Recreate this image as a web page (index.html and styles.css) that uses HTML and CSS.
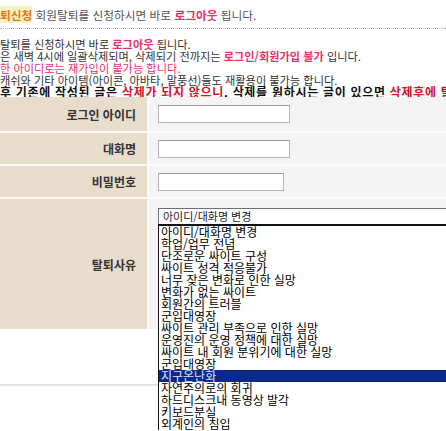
FILE: index.html
```html
<!DOCTYPE html>
<html lang="ko">

<head>
    <meta charset="UTF-8">
    <title>회원탈퇴신청</title>
    <link rel="stylesheet" href="styles.css">
</head>

<body>
    <div id="page">
        <div class="head">
            <span class="head-title">퇴신청</span>
            회원탈퇴를 신청하시면 바로 <span class="pink">로그아웃</span> 됩니다.
        </div>

        <div class="notice">
            <p>탈퇴를 신청하시면 바로 <span class="pink">로그아웃</span> 됩니다.</p>
            <p>은 새벽 4시에 일괄삭제되며, 삭제되기 전까지는 <span class="pink">로그인/회원가입 불가</span> 입니다.</p>
            <p class="pink-line">한 아이디로는 재가입이 불가능 합니다.</p>
            <p>캐쉬와 기타 아이템(아이콘, 아바타, 말풍선)들도 재활용이 불가능 합니다.</p>
            <p class="strong-line">후 기존에 작성된 글은 <span class="red">삭제가 되지 않으니</span>. 삭제를 원하시는 글이 있으면 <span class="red">삭제후에 탈퇴</span></p>
        </div>

        <div class="form">
            <div class="label">로그인 아이디</div>
            <div class="field"><input type="text" class="box"></div>

            <div class="label">대화명</div>
            <div class="field"><input type="text" class="box"></div>

            <div class="label">비밀번호</div>
            <div class="field"><input type="password" class="box short"></div>

            <div class="label">탈퇴사유</div>
            <div class="field top">
                <div class="select">아이디/대화명 변경</div>
            </div>
        </div>

        <div class="bottom-line"></div>

        <ul class="dropdown">
            <li>아이디/대화명 변경</li>
            <li>학업/업무 전념</li>
            <li>단조로운 싸이트 구성</li>
            <li>싸이트 성격 적응불가</li>
            <li>너무 잦은 변화로 인한 실망</li>
            <li>변화가 없는 싸이트</li>
            <li>회원간의 트러블</li>
            <li>군입대영장</li>
            <li>싸이트 관리 부족으로 인한 실망</li>
            <li>운영진의 운영 정책에 대한 실망</li>
            <li>싸이트 내 회원 분위기에 대한 실망</li>
            <li>군입대영장</li>
            <li class="selected">지구온난화</li>
            <li>자연주의로의 회귀</li>
            <li>하드디스크내 동영상 발각</li>
            <li>키보드분실</li>
            <li>외계인의 침입</li>
        </ul>
    </div>
</body>

</html>
```

FILE: styles.css
```css
body {
    margin: 0;
    font-family: 'Noto Sans CJK KR', 'DejaVu Sans', sans-serif;
    font-size: 11px;
    color: #444;
    background: #fff;
    overflow: hidden;
}

#page {
    position: relative;
    width: 446px;
    height: 431px;
    overflow: hidden;
}

.head {
    height: 24px;
    line-height: 22px;
    padding-top: 4px;
    border-bottom: 1px dotted #aaa;
    white-space: nowrap;
    color: #555;
    font-size: 11.7px;
}

.head-title {
    color: #e07a10;
    font-weight: bold;
    background: #fbefc4;
}

.pink {
    color: #e0336a;
    font-weight: bold;
}

.red {
    color: #d8102a;
}

.notice {
    padding-top: 9px;
    height: 59px;
    white-space: nowrap;
    font-size: 11.2px;
}

.notice p {
    margin: 0;
    height: 12px;
    line-height: 12px;
    color: #333;
}

.notice .pink-line {
    color: #e0336a;
}

.notice .strong-line {
    font-weight: bold;
    color: #111;
    font-size: 12px;
    letter-spacing: 0.7px;
}

.form {
    display: grid;
    grid-template-columns: 147px 1fr;
    grid-template-rows: 34px 31px 31px 130px;
    gap: 2px;
    background: #fdfbf7;
    width: 520px;
}

.label {
    background: #e8dccc;
    color: #333;
    font-weight: bold;
    font-size: 12px;
    display: flex;
    align-items: center;
    justify-content: flex-end;
    padding-right: 11px;
}

.field {
    background: #f4f4f4;
    display: flex;
    align-items: center;
    padding-left: 9px;
}

.field.top {
    align-items: flex-start;
    padding-top: 9px;
}

.box {
    width: 128px;
    height: 14px;
    margin: 0;
    padding: 1px;
    border: 1px solid #b4b4b4;
    border-top-color: #9c9c9c;
    background: #fff;
}

.box.short {
    width: 122px;
}

.select {
    width: 400px;
    height: 15px;
    line-height: 15px;
    border: 1px solid #6a7078;
    background: #fff;
    color: #222;
    padding-left: 4px;
    font-size: 11px;
}

.bottom-line {
    margin-top: 55px;
    height: 2px;
    background: #e2e2e2;
}

.dropdown {
    position: absolute;
    left: 158px;
    top: 224px;
    width: 320px;
    margin: 0;
    padding: 0;
    list-style: none;
    background: #fff;
    border-top: 2px solid #111;
    border-left: 1px solid #111;
}

.dropdown li {
    height: 12px;
    line-height: 12px;
    padding-left: 2px;
    font-size: 12px;
    color: #000;
    white-space: nowrap;
}

.dropdown .selected {
    background: #0a2a8a;
    color: #d8e4ff;
}
```
